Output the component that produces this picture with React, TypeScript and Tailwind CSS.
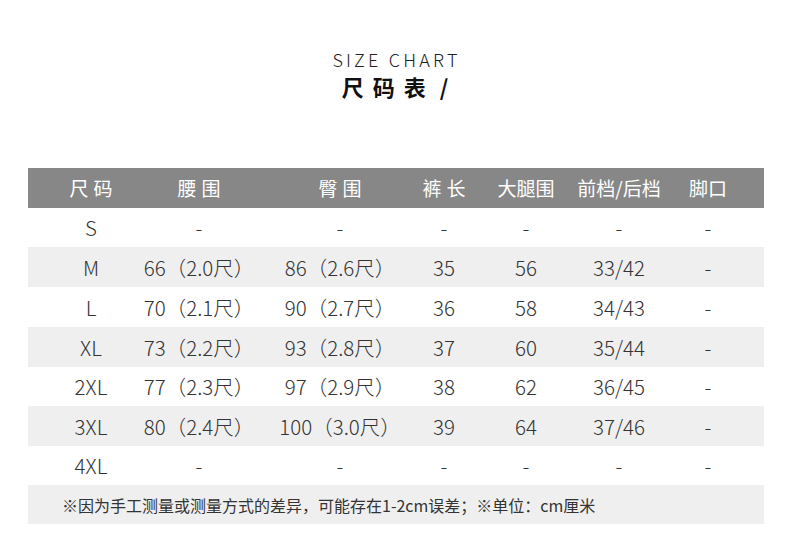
import React from "react";

const cols = [
  "w-[117px] pl-[9px]",
  "w-[125px] pr-[17px]",
  "w-[122px] pl-[18px]",
  "w-[93px] pl-[11px]",
  "w-[87px] pr-[5px]",
  "w-[92px] pl-[2px]",
  "w-[100px] pr-[12px]",
];

const headers: { t: string; spaced: boolean }[] = [
  { t: "尺码", spaced: true },
  { t: "腰围", spaced: true },
  { t: "臀围", spaced: true },
  { t: "裤长", spaced: true },
  { t: "大腿围", spaced: false },
  { t: "前档/后档", spaced: false },
  { t: "脚口", spaced: false },
];

const rows: { cells: string[]; h: string; gray: boolean }[] = [
  { cells: ["S", "-", "-", "-", "-", "-", "-"], h: "h-[39px]", gray: false },
  { cells: ["M", "66（2.0尺）", "86（2.6尺）", "35", "56", "33/42", "-"], h: "h-[40px]", gray: true },
  { cells: ["L", "70（2.1尺）", "90（2.7尺）", "36", "58", "34/43", "-"], h: "h-[40px]", gray: false },
  { cells: ["XL", "73（2.2尺）", "93（2.8尺）", "37", "60", "35/44", "-"], h: "h-[40px]", gray: true },
  { cells: ["2XL", "77（2.3尺）", "97（2.9尺）", "38", "62", "36/45", "-"], h: "h-[39px]", gray: false },
  { cells: ["3XL", "80（2.4尺）", "100（3.0尺）", "39", "64", "37/46", "-"], h: "h-[40px]", gray: true },
  { cells: ["4XL", "-", "-", "-", "-", "-", "-"], h: "h-[39px]", gray: false },
];

export default function App() {
  return (
    <div
      className="w-[790px] h-[546px] bg-white text-[#333333] overflow-hidden"
      style={{ fontFamily: '"Noto Sans CJK SC", "Noto Sans", sans-serif' }}
    >
      <div className="h-[168px] flex flex-col items-center pt-[47px]">
        <div className="text-[18px] leading-[24px] tracking-[3.2px] mr-[-3px] font-light text-[#222222]">
          SIZE CHART
        </div>
        <div className="mt-[1px] text-[22px] leading-[28px] font-bold text-[#111111] flex items-center">
          <span className="tracking-[9px]">尺码表</span>
          <span className="ml-[5px]">/</span>
        </div>
      </div>
      <div className="ml-[28px] w-[736px]">
        <div className="flex h-[40px] bg-[#878787] text-white text-[19px]">
          {headers.map((h, i) => (
            <div key={i} className={`${cols[i]} flex items-center justify-center whitespace-nowrap`}>
              {h.spaced ? (
                <span className="tracking-[5px] mr-[-5px]">{h.t}</span>
              ) : (
                <span>{h.t}</span>
              )}
            </div>
          ))}
        </div>
        {rows.map((r, ri) => (
          <div
            key={ri}
            className={`flex ${r.h} ${r.gray ? "bg-[#efefef]" : "bg-white"} text-[20.5px] font-light text-[#333333]`}
          >
            {r.cells.map((c, ci) => (
              <div key={ci} className={`${cols[ci]} flex items-center justify-center whitespace-nowrap`}>
                {c}
              </div>
            ))}
          </div>
        ))}
        <div className="h-[39px] bg-[#efefef] flex items-center pl-[34px] text-[16px] text-[#333333] whitespace-nowrap">
          ※因为手工测量或测量方式的差异，可能存在1-2cm误差；※单位：cm厘米
        </div>
      </div>
    </div>
  );
}
